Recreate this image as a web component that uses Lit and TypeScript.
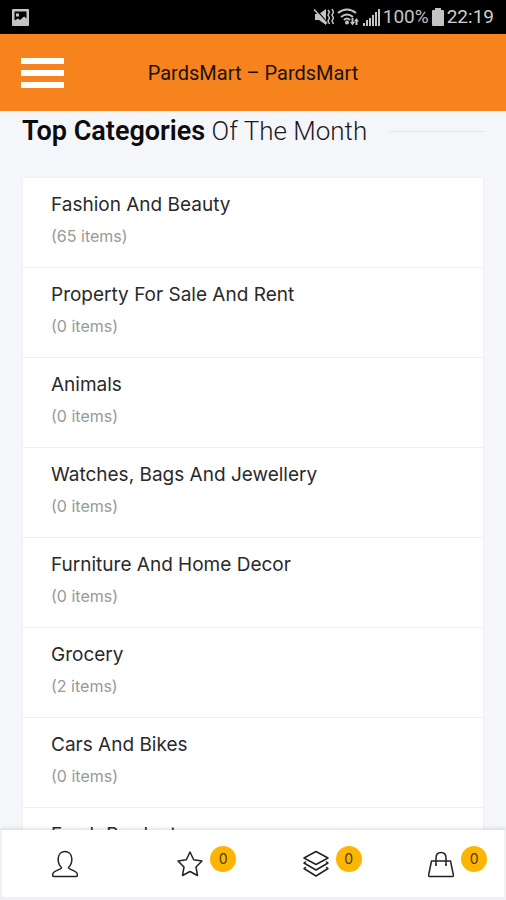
import { LitElement, html, svg, css } from "lit";
import { customElement, property } from "lit/decorators.js";

const categories = [
  { name: "Fashion And Beauty", count: 65 },
  { name: "Property For Sale And Rent", count: 0 },
  { name: "Animals", count: 0 },
  { name: "Watches, Bags And Jewellery", count: 0 },
  { name: "Furniture And Home Decor", count: 0 },
  { name: "Grocery", count: 2 },
  { name: "Cars And Bikes", count: 0 },
  { name: "Fresh Products", count: 0 },
];

@customElement("status-bar")
class StatusBar extends LitElement {
  static styles = css`
    :host {
      display: flex;
      align-items: center;
      gap: 3px;
      height: 34px;
      padding: 0 12px;
      background: #000;
      color: #c4c4c4;
      font: 19px/24px Roboto, sans-serif;
    }
    svg { display: block; fill: currentColor; }
    .space { flex: 1; }
    .clock { color: #d0d0d0; }
  `;
  render() {
    return html`
      <svg width="17" height="17" viewBox="0 0 17 17" aria-hidden="true">
        <path fill-rule="evenodd" d="M1 0h15q1 0 1 1v15q0 1-1 1H1q-1 0-1-1V1q0-1 1-1zM2.500 2.500v9l3.500-2 2 1.500 4-3.500 2.500 2V2.500zM4 4.500h3v3H4z" />
      </svg>
      <span class="space"></span>
      <svg width="20" height="18" viewBox="0 0 20 18" aria-hidden="true">
        <path d="M1 6h4l7-5v16l-7-5H1z" />
        <path d="M1.500 1l12 14" stroke="#000" stroke-width="1.500" />
        <path d="M0 1.500l13 14" stroke="currentColor" stroke-width="1.500" />
        <path d="M14 2l1.500 2-1.500 3 1.500 3-1.500 3 1.500 3M18 1l1.500 3-1.500 3 1.500 3-1.500 3 1.500 3" fill="none" stroke="currentColor" stroke-width="1.500" />
      </svg>
      <svg width="23" height="18" viewBox="0 0 23 18" aria-hidden="true">
        <path d="M1 5q9-7 18 0M4 9q6-5 12 0M7 12q3-3 6 0" fill="none" stroke="currentColor" stroke-width="2" />
        <circle cx="10" cy="14.500" r="2" />
        <path d="M14.500 10h2v4H18l-2.500 3.500L13 14h1.500zM19.500 10l2.500 3.500h-1.500V17h-2v-3.500H17z" />
      </svg>
      <svg width="17" height="17" viewBox="0 0 17 17" aria-hidden="true">
        <path d="M0 14h2v3H0zM3 11h2v6H3zM6 9h2v8H6zM9 6h2v11H9zM12 3h2v14h-2zM15 0h2v17h-2z" />
      </svg>
      <span class="charge">100%</span>
      <svg width="12" height="18" viewBox="0 0 12 18" aria-hidden="true">
        <path d="M3 0h6v2h2q1 0 1 1v14q0 1-1 1H1q-1 0-1-1V3q0-1 1-1h2z" />
      </svg>
      <span class="clock">22:19</span>
    `;
  }
}

@customElement("title-bar")
class TitleBar extends LitElement {
  static styles = css`
    :host {
      display: grid;
      grid-template-columns: 86px 1fr 86px;
      align-items: center;
      height: 77px;
      background: #f7831f;
    }
    .menu {
      display: grid;
      gap: 6px;
      width: 43px;
      margin-left: 21px;
      padding: 0;
      border: 0;
      background: none;
    }
    .bar { height: 6px; background: #fff; }
    .title {
      margin: 0;
      text-align: center;
      color: #1c1208;
      font: 400 20px/28px Roboto, sans-serif;
    }
  `;
  render() {
    return html`
      <button class="menu" aria-label="Menu">
        <span class="bar"></span><span class="bar"></span><span class="bar"></span>
      </button>
      <h1 class="title">PardsMart – PardsMart</h1>
    `;
  }
}

@customElement("category-list")
class CategoryList extends LitElement {
  static styles = css`
    :host { display: block; padding: 5px 22px 0; }
    .heading { display: flex; align-items: center; gap: 22px; margin-bottom: 31px; }
    .text {
      margin: 0;
      color: #1b1b1e;
      white-space: nowrap;
      font: 300 26px/30px Roboto, sans-serif;
    }
    .strong { color: #0c0c0e; font-size: 27px; font-weight: 600; }
    .rule { flex: 1; height: 1px; background: #e3e5e8; }
    .list {
      margin: 0;
      padding: 0;
      list-style: none;
      background: #fff;
      border: 1px solid #f0f1f4;
    }
    .row { height: 89px; border-bottom: 1px solid #eeefef; }
    .link {
      display: block;
      padding: 13px 28px;
      color: #2a2a2a;
      text-decoration: none;
      font: 400 19px/28px Inter, sans-serif;
    }
    .count {
      display: block;
      margin-top: 3px;
      color: #999;
      font: 400 16px/28px Inter, sans-serif;
    }
  `;
  render() {
    return html`
      <div class="heading">
        <h2 class="text"><span class="strong">Top Categories</span> Of The Month</h2>
        <span class="rule"></span>
      </div>
      <ul class="list">
        ${categories.map(
          (c) => html`<li class="row">
            <a class="link" href="#">${c.name}<span class="count">(${c.count} items)</span></a>
          </li>`,
        )}
      </ul>
    `;
  }
}

const icons: Record<string, unknown> = {
  account: svg`<path d="M9.500 17.500C7 15 6 11.500 6.200 8.500 6.500 4 9.500 1.500 13 1.500S19.500 4 19.800 8.500C20 11.500 19 15 16.500 17.500 16 20 25.500 20 25.500 25 25.500 26.500 25 26.500 24 26.500H2C1 26.500.5 26.500.5 25 .5 20 10 20 9.500 17.500z" />`,
  wishlist: svg`<path d="M13 2l3.700 7.800 8.300 1.200-6 6 1.500 8.500L13 21.500 5.500 25.500 7 17 1 11l8.300-1.200z" />`,
  compare: svg`<path d="M13 1.500l12 6.500-12 6.500L1 8zM3 11.500L1 13 13 20l12-7-2-1.500M3 17l-2 1.500 12 7.500 12-7.500-2-1.500" />`,
  cart: svg`<path d="M3.500 11h19l3 14.500q0 1-1 1h-23q-1 0-1-1zM8 15V8q0-5.500 5-5.500T18 8v7M7 15h2M17 15h2" />`,
};

@customElement("nav-item")
class NavItem extends LitElement {
  @property() icon = "account";
  @property() label = "";
  @property() badge = "";
  static styles = css`
    :host { display: flex; justify-content: center; }
    .link {
      position: relative;
      display: block;
      color: #222;
      text-decoration: none;
    }
    .glyph {
      display: block;
      fill: none;
      stroke: currentColor;
      stroke-width: 1.500;
      stroke-linejoin: round;
    }
    .badge {
      position: absolute;
      left: 33px;
      top: -4px;
      width: 26px;
      height: 26px;
      border-radius: 50%;
      background: #fcb502;
      color: #4a3a10;
      text-align: center;
      font: 400 14px/26px Inter, sans-serif;
    }
  `;
  render() {
    return html`<a class="link" href="#" aria-label=${this.label}>
      <svg class="glyph" width="26" height="28" viewBox="0 0 26 28" aria-hidden="true">${icons[this.icon]}</svg>
      ${this.badge ? html`<span class="badge">${this.badge}</span>` : ""}
    </a>`;
  }
}

@customElement("app-root")
class AppRoot extends LitElement {
  static styles = css`
    :host {
      display: flex;
      flex-direction: column;
      height: 100vh;
      background: #f5f6fa;
    }
    .content { flex: 1; min-height: 0; overflow: hidden; }
    .nav {
      display: grid;
      grid-template-columns: repeat(4, 1fr);
      align-items: center;
      height: 67px;
      border: solid #f1f1f3;
      border-width: 0 2px 3px;
      background: #fff;
      box-shadow: 0 -1px 4px rgba(0, 0, 0, 0.15);
    }
  `;
  render() {
    return html`
      <status-bar></status-bar>
      <title-bar></title-bar>
      <main class="content"><category-list></category-list></main>
      <nav class="nav">
        <nav-item icon="account" label="Account"></nav-item>
        <nav-item icon="wishlist" label="Wishlist" badge="0"></nav-item>
        <nav-item icon="compare" label="Compare" badge="0"></nav-item>
        <nav-item icon="cart" label="Cart" badge="0"></nav-item>
      </nav>
    `;
  }
}
